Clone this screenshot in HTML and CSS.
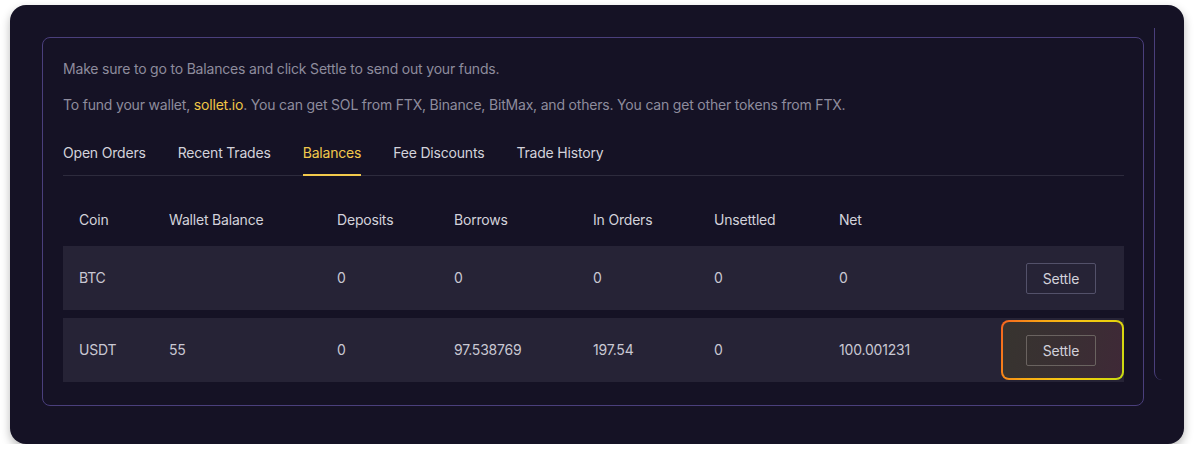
FILE: index.html
```html
<!DOCTYPE html>
<html>
<head>
<meta charset="utf-8">
<link rel="stylesheet" href="styles.css">
</head>
<body>
<div class="card">
  <div class="panel">
    <p class="note">Make sure to go to Balances and click Settle to send out your funds.</p>
    <p class="note second">To fund your wallet, <a class="link">sollet.io</a>. You can get SOL from FTX, Binance, BitMax, and others. You can get other tokens from FTX.</p>
    <div class="tabs">
      <div class="tab">Open Orders</div>
      <div class="tab">Recent Trades</div>
      <div class="tab active">Balances</div>
      <div class="tab">Fee Discounts</div>
      <div class="tab">Trade History</div>
    </div>
    <div class="table">
      <div class="row head">
        <div>Coin</div><div>Wallet Balance</div><div>Deposits</div><div>Borrows</div><div>In Orders</div><div>Unsettled</div><div>Net</div><div></div>
      </div>
      <div class="row body">
        <div>BTC</div><div></div><div>0</div><div>0</div><div>0</div><div>0</div><div>0</div>
        <div class="act"><button class="settle">Settle</button></div>
      </div>
      <div class="row body">
        <div>USDT</div><div>55</div><div>0</div><div>97.538769</div><div>197.54</div><div>0</div><div>100.001231</div>
        <div class="act"><span class="spot"></span><button class="settle lit">Settle</button></div>
      </div>
    </div>
  </div>
  <div class="side"></div>
</div>
</body>
</html>
```

FILE: styles.css
```css
html, body {
  margin: 0;
  padding: 0;
  background: #ffffff;
}
body {
  font-family: Inter, "Noto Sans", sans-serif;
  font-size: 14px;
  line-height: 20px;
  letter-spacing: -0.19px;
}
.card {
  margin: 5px 10px 0 10px;
  width: 1174px;
  height: 439px;
  background: #151225;
  border-radius: 16px;
  box-shadow: 0 4px 10px rgba(0, 0, 0, 0.28);
  display: flex;
  align-items: flex-start;
  padding: 32px 0 0 32px;
  box-sizing: border-box;
  overflow: hidden;
}
.panel {
  flex: none;
  width: 1102px;
  height: 369px;
  box-sizing: border-box;
  border: 1px solid #4a3f7c;
  border-radius: 8px;
  padding: 21px 19px 0 20px;
}
.note {
  margin: 0;
  color: #8e8c9d;
}
.note.second {
  margin-top: 16px;
}
.link {
  color: #f0c645;
}
.tabs {
  display: flex;
  gap: 32px;
  margin-top: 28px;
  border-bottom: 1px solid #2d2b3d;
}
.tab {
  color: #d3d2db;
  padding-bottom: 11px;
  border-bottom: 2px solid transparent;
  margin-bottom: -1px;
}
.tab.active {
  color: #f2c94c;
  border-bottom-color: #f2c94c;
}
.table {
  display: flex;
  flex-direction: column;
  gap: 8px;
}
.row {
  display: grid;
  grid-template-columns: 90px 168px 117px 139px 121px 125px 1fr auto;
  align-items: center;
  padding: 0 28px 0 16px;
}
.row.head {
  color: #d3d2db;
  padding-top: 34px;
  padding-bottom: 8px;
}
.row.body {
  height: 64px;
  background: #262336;
  color: #c9c8d3;
  position: relative;
}
.act {
  display: flex;
}
.settle {
  position: relative;
  z-index: 1;
  width: 70px;
  height: 31px;
  background: transparent;
  border: 1px solid #53516a;
  border-radius: 2px;
  color: #d2d1da;
  font-family: Inter, "Noto Sans", sans-serif;
  font-size: 14px;
  letter-spacing: -0.19px;
  padding: 0;
}
.settle.lit {
  border-color: #6a6360;
}
.spot {
  position: absolute;
  right: 0;
  top: 2px;
  width: 123px;
  height: 60px;
  box-sizing: border-box;
  border: 2px solid transparent;
  border-radius: 8px;
  background:
    linear-gradient(100deg, #37342f 0%, #3a2f33 55%, #3f2937 100%) padding-box,
    linear-gradient(110deg, #f5621f 0%, #f8a814 30%, #f6c515 55%, #ecd00c 75%, #c6dc12 100%) border-box;
}
.side {
  flex: none;
  width: 200px;
  height: 352px;
  margin-left: 10px;
  margin-top: -9px;
  border-left: 1px solid #4a3f7c;
  border-bottom-left-radius: 8px;
}
```
